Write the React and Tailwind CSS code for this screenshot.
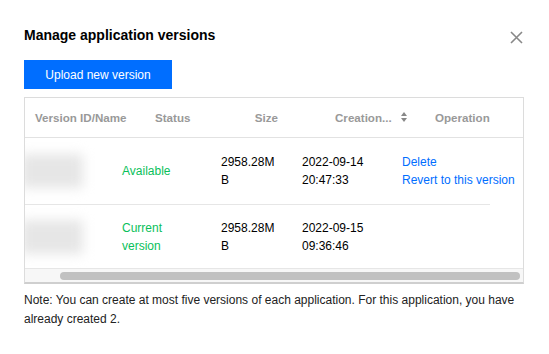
const font = { fontFamily: '"Liberation Sans", Arial, Helvetica, sans-serif' }

function Blur() {
  return (
    <div className="h-full flex items-center overflow-hidden">
      <div className="w-[62px] h-[34px] bg-[#e6e6e6] blur-[6px] -ml-[4px]" />
    </div>
  )
}

export default function App() {
  return (
    <div className="w-[549px] h-[354px] bg-white relative text-black" style={font}>
      <div className="pt-[25px] pl-[24px] pr-[25px]">
        <h2 className="text-[14px] leading-[20px] font-bold">Manage application versions</h2>
        <button className="absolute top-[31px] right-[26px] text-[#888]">
          <svg width="13" height="13" viewBox="0 0 13 13" fill="none" stroke="currentColor" strokeWidth="1.6">
            <path d="M1 1L12 12M12 1L1 12" />
          </svg>
        </button>
        <button className="mt-[15px] w-[148px] h-[29px] bg-[#006eff] text-white text-[12px]">
          Upload new version
        </button>

        <div className="mt-[8px] w-[500px] border border-[#dcdcdc] border-b-[#cfcfcf] border-b-2 text-[12px] overflow-hidden">
          <div className="flex h-[40px] items-center border-b border-[#e2e2e2] text-[#999] font-bold text-[11.6px]">
            <div className="w-[120px] pl-[10px]">Version ID/Name</div>
            <div className="w-[55px] pl-[10px]">Status</div>
            <div className="w-[88px] pr-[10px] text-right">Size</div>
            <div className="w-[137px] pl-[47px] flex items-center">
              <span>Creation...</span>
              <svg className="ml-[9px]" width="6" height="10" viewBox="0 0 6 10" fill="#888">
                <path d="M3 0L6 4H0Z M3 10L0 6H6Z" />
              </svg>
            </div>
            <div className="pl-[10px]">Operation</div>
          </div>

          <div className="flex h-[66px] items-center leading-[18px]">
            <div className="w-[87px] h-full"><Blur /></div>
            <div className="w-[99px] pl-[10px] text-[#0abf5b]">Available</div>
            <div className="w-[81px] pl-[10px] pr-[14px] break-all">2958.28MB</div>
            <div className="w-[100px] pl-[10px]">2022-09-14<br />20:47:33</div>
            <div className="pl-[10px] text-[#006eff] whitespace-nowrap">
              <div>Delete</div>
              <div>Revert to this version</div>
            </div>
          </div>
          <div className="w-[465px] h-px bg-[#e6e6e6]" />

          <div className="flex h-[64px] items-center leading-[18px] border-b border-[#e6e6e6]">
            <div className="w-[87px] h-full"><Blur /></div>
            <div className="w-[99px] pl-[10px] text-[#0abf5b]">Current<br />version</div>
            <div className="w-[81px] pl-[10px] pr-[14px] break-all">2958.28MB</div>
            <div className="w-[100px] pl-[10px]">2022-09-15<br />09:36:46</div>
            <div className="pl-[10px]" />
          </div>

          <div className="h-[13px] bg-[#f7f7f7] flex items-center pl-[35px] pr-[3px]">
            <div className="h-[8px] w-full rounded-full bg-[#c1c1c1]" />
          </div>
        </div>

        <p className="mt-[7px] text-[12px] leading-[19px] text-[#222]">
          Note: You can create at most five versions of each application. For this application, you have already created 2.
        </p>
      </div>
    </div>
  )
}
